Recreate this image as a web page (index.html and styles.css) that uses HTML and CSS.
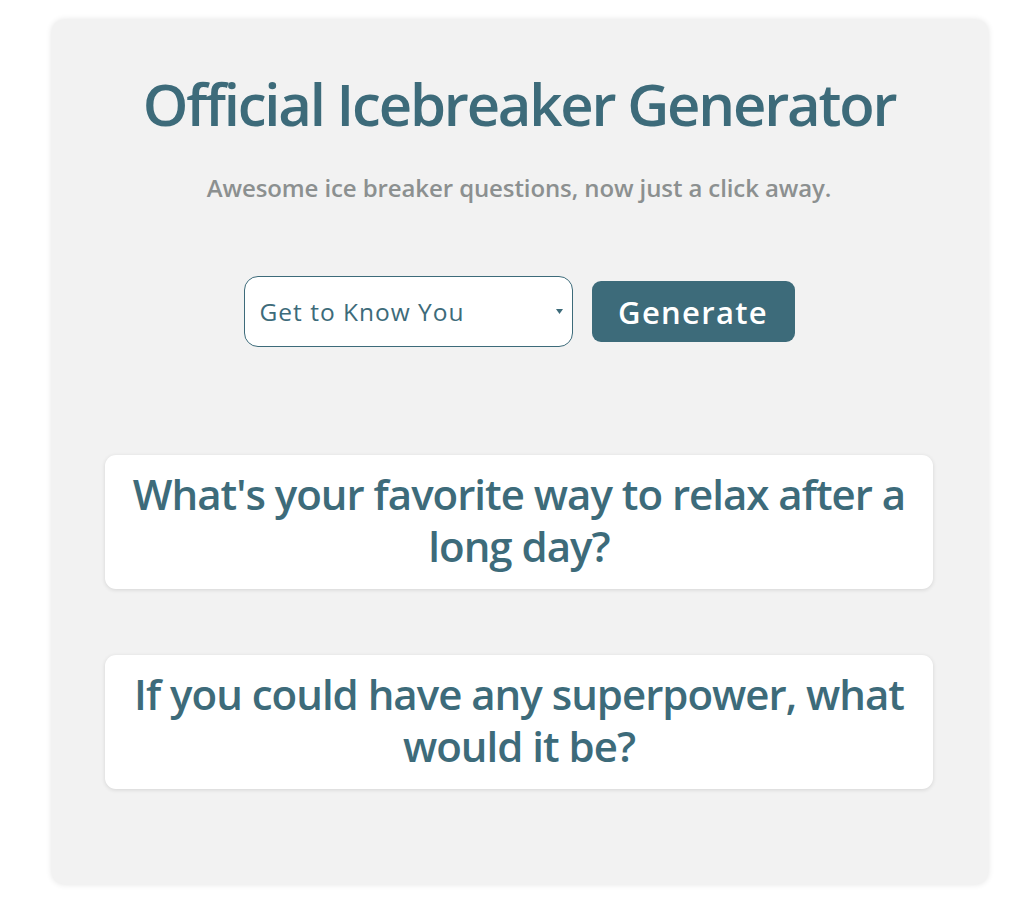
FILE: index.html
```html
<!DOCTYPE html>
<html>
<head>
<meta charset="utf-8">
<link rel="stylesheet" href="styles.css">
</head>
<body>
<main class="card">
  <h1 class="title">Official Icebreaker Generator</h1>
  <p class="subtitle">Awesome ice breaker questions, now just a click away.</p>
  <div class="controls">
    <div class="select">
      <span class="select-text">Get to Know You</span>
      <svg class="caret" width="7" height="5" viewBox="0 0 7 5"><path d="M0 0H7L3.5 5Z" fill="#3d6b7a"/></svg>
    </div>
    <button class="btn">Generate</button>
  </div>
  <div class="questions">
    <div class="q">What's your favorite way to relax after a long day?</div>
    <div class="q">If you could have any superpower, what would it be?</div>
  </div>
</main>
</body>
</html>
```
FILE: styles.css
```css
html, body { margin: 0; padding: 0; background: #ffffff; }
body {
  font-family: "Open Sans", "Noto Sans", sans-serif;
  padding: 20px 36px 28px 52px;
}
.card {
  width: 936px;
  height: 864px;
  box-sizing: border-box;
  background: #f2f2f2;
  border-radius: 12px;
  box-shadow: 0 0 6px rgba(0,0,0,0.12);
  padding: 48px 55px 0 53px;
  display: flex;
  flex-direction: column;
  align-items: center;
}
.title {
  margin: 0;
  font-size: 58px;
  font-weight: 600;
  letter-spacing: -2.2px;
  color: #3d6b7a;
  line-height: 72px;
  text-align: center;
  white-space: nowrap;
}
.subtitle {
  margin: 33px 0 0;
  font-size: 24px;
  font-weight: 600;
  letter-spacing: -0.1px;
  color: #8c9090;
  line-height: 30px;
}
.controls {
  margin-top: 73px;
  display: flex;
  align-items: center;
  gap: 19px;
}
.select {
  width: 329px;
  height: 71px;
  box-sizing: border-box;
  border: 1px solid #3d6b7a;
  border-radius: 14px;
  background: #fff;
  display: flex;
  align-items: center;
  justify-content: space-between;
  padding: 0 9px 0 15px;
}
.select-text {
  font-size: 24.5px;
  font-weight: 500;
  letter-spacing: 1px;
  color: #3d6b7a;
}
.caret { display: block; }
.btn {
  width: 203px;
  height: 61px;
  border: none;
  border-radius: 9px;
  background: #3d6b7a;
  color: #fff;
  font-family: inherit;
  font-size: 31px;
  font-weight: 600;
  letter-spacing: 1.3px;
  padding: 0;
}
.questions {
  margin-top: 108px;
  width: 100%;
  display: flex;
  flex-direction: column;
  gap: 66px;
}
.q {
  background: #fff;
  border-radius: 11px;
  box-shadow: 0 1px 4px rgba(0,0,0,0.12);
  height: 134px;
  box-sizing: border-box;
  padding: 13px 16px 0;
  text-align: center;
  font-size: 42px;
  letter-spacing: -1px;
  line-height: 52px;
  font-weight: 600;
  color: #3d6b7a;
}
```
